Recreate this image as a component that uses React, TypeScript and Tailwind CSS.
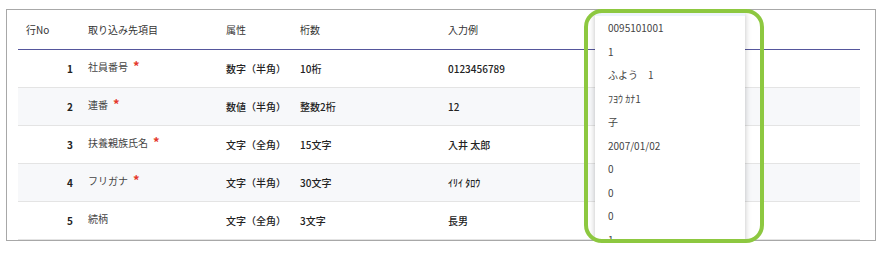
import React from "react";

interface Row {
  no: number;
  name: string;
  required: boolean;
  type: string;
  digits: string;
  sample: string;
}

const rows: Row[] = [
  { no: 1, name: "社員番号", required: true, type: "数字（半角）", digits: "10桁", sample: "0123456789" },
  { no: 2, name: "連番", required: true, type: "数値（半角）", digits: "整数2桁", sample: "12" },
  { no: 3, name: "扶養親族氏名", required: true, type: "文字（全角）", digits: "15文字", sample: "入井 太郎" },
  { no: 4, name: "フリガナ", required: true, type: "文字（半角）", digits: "30文字", sample: "ｲﾘｲ ﾀﾛｳ" },
  { no: 5, name: "続柄", required: false, type: "文字（全角）", digits: "3文字", sample: "長男" },
];

const options = [
  "0095101001",
  "1",
  "ふよう　1",
  "ﾌﾖｳ ｶﾅ1",
  "子",
  "2007/01/02",
  "0",
  "0",
  "0",
  "1",
];

const cols = "grid grid-cols-[62px_138px_74px_148px_1fr]";

const App = () => {
  return (
    <div
      className="relative w-[886px] h-[253px] bg-white pt-[9px] pl-[6px]"
      style={{ fontFamily: '"Noto Sans CJK JP", "Noto Sans", sans-serif' }}
    >
      <div className="relative w-[870px] h-[232px] border border-[#a8a8a8] overflow-hidden">
        <div className="ml-[11px] w-[842px] text-[10px]">
          {/* header */}
          <div className={`${cols} h-[40px] items-center border-b border-[#55569c] text-[#333]`}>
            <div className="pl-[8px]">行No</div>
            <div className="pl-[8px]">取り込み先項目</div>
            <div className="pl-[8px]">属性</div>
            <div className="pl-[8px]">桁数</div>
            <div className="pl-[8px]">入力例</div>
          </div>

          {rows.map((row, i) => (
            <div
              key={row.no}
              className={`${cols} h-[38px] items-center border-b border-[#e4e4e4] ${
                i % 2 === 1 ? "bg-[#f7f8fa]" : "bg-white"
              }`}
            >
              <div className="pr-[7px] text-right font-semibold text-[#222]">{row.no}</div>
              <div className="pl-[8px] -mt-[4px] flex items-start text-[#444]">
                {row.name}
                {row.required && (
                  <span className="ml-[5px] text-[13px] leading-[13px] font-bold text-[#e5392b]">*</span>
                )}
              </div>
              <div className="pl-[8px] font-medium text-[#222]">{row.type}</div>
              <div className="pl-[8px] font-medium text-[#222]">{row.digits}</div>
              <div className="pl-[8px] font-medium text-[#222]">{row.sample}</div>
            </div>
          ))}
        </div>

        {/* dropdown list */}
        <div className="absolute left-[588px] top-[3px] w-[150px] h-[260px] bg-white shadow-[0_0_6px_rgba(0,0,0,0.25)]">
          <div className="h-[3px] bg-[#edf4fc]" />
          {options.map((opt, i) => (
            <div key={i} className="h-[23.5px] leading-[23.5px] pl-[13px] text-[10px] text-[#444]">
              {opt}
            </div>
          ))}
        </div>
      </div>

      {/* highlight annotation */}
      <div className="absolute left-[584px] top-[9px] w-[180px] h-[234px] border-4 border-[#8dc840] rounded-[18px] pointer-events-none" />
    </div>
  );
};

export default App;
